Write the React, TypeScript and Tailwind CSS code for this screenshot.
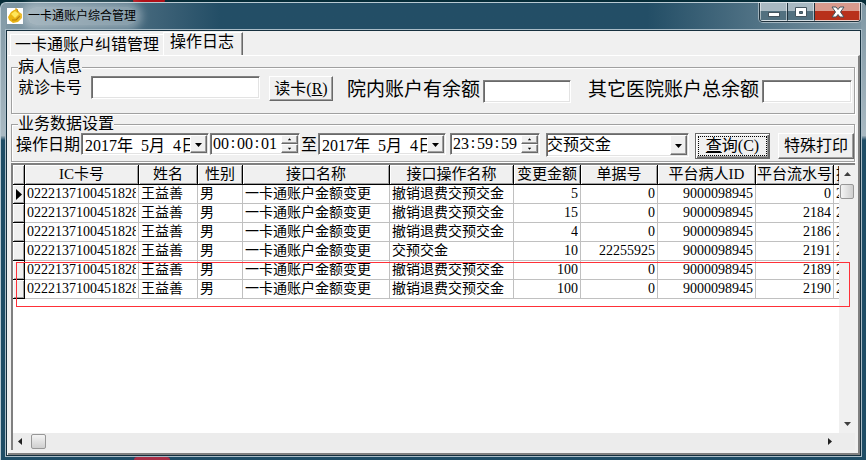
import type { ReactNode } from "react";

const sunken =
  "border border-t-[#808080] border-l-[#808080] border-r-white border-b-white shadow-[inset_1px_1px_0_#696969,inset_-1px_-1px_0_#e3e3e3] bg-white";
const raised =
  "border border-t-white border-l-white border-r-[#696969] border-b-[#696969] shadow-[inset_-1px_-1px_0_#a0a0a0] bg-[#f0f0f0]";

type Align = "left" | "right";
interface Column {
  title: string;
  width: string;
  align: Align;
}

const columns: Column[] = [
  { title: "IC卡号", width: "w-[114px]", align: "left" },
  { title: "姓名", width: "w-[59px]", align: "left" },
  { title: "性别", width: "w-[45px]", align: "left" },
  { title: "接口名称", width: "w-[147px]", align: "left" },
  { title: "接口操作名称", width: "w-[124px]", align: "left" },
  { title: "变更金额", width: "w-[67px]", align: "right" },
  { title: "单据号", width: "w-[77px]", align: "right" },
  { title: "平台病人ID", width: "w-[98px]", align: "right" },
  { title: "平台流水号", width: "w-[78px]", align: "right" },
  { title: "操", width: "", align: "left" },
];

const records = [
  { op: "撤销退费交预交金", amount: "5", bill: "0", serial: "0" },
  { op: "撤销退费交预交金", amount: "15", bill: "0", serial: "2184" },
  { op: "撤销退费交预交金", amount: "4", bill: "0", serial: "2186" },
  { op: "交预交金", amount: "10", bill: "22255925", serial: "2191" },
  { op: "撤销退费交预交金", amount: "100", bill: "0", serial: "2189" },
  { op: "撤销退费交预交金", amount: "100", bill: "0", serial: "2190" },
];

function Group({ title, children }: { title: string; children: ReactNode }) {
  return (
    <fieldset className="min-w-0 border border-[#a0a0a0] shadow-[inset_1px_1px_0_white,1px_1px_0_white]">
      <legend className="ml-1.5 bg-[#f0f0f0] text-base leading-4">{title}</legend>
      {children}
    </fieldset>
  );
}

function Arrow({ dir, className = "" }: { dir: "up" | "down" | "left" | "right"; className?: string }) {
  const points = {
    up: "0,5 7,5 3.5,1",
    down: "0,2 7,2 3.5,6",
    left: "5,0 5,7 1,3.5",
    right: "2,0 2,7 6,3.5",
  }[dir];
  return (
    <svg viewBox="0 0 7 7" className={`size-[7px] shrink-0 ${className}`} aria-hidden="true">
      <polygon points={points} fill="currentColor" />
    </svg>
  );
}

function DateBox({ label }: { label: string }) {
  return (
    <div className={`flex h-[22px] w-[128px] shrink-0 p-px ${sunken}`}>
      <input
        aria-label={label}
        defaultValue={"2017年\u00a0\u00a05月\u00a0\u00a04日"}
        className="min-w-0 flex-1 pl-0.5 text-base leading-4 outline-none"
      />
      <button aria-label={`${label}下拉`} className={`flex w-[17px] items-center justify-center ${raised}`}>
        <Arrow dir="down" />
      </button>
    </div>
  );
}

function TimeBox({ label, parts }: { label: string; parts: string[] }) {
  return (
    <div role="group" aria-label={label} className={`flex h-[22px] w-[90px] shrink-0 p-px ${sunken}`}>
      <div className="flex flex-1 items-center pl-px text-base leading-4">
        {parts.map((p, i) => (
          <span key={i} className="flex">
            {i > 0 && <span className="w-2 text-center">:</span>}
            <input aria-label={`${label}${["时", "分", "秒"][i]}`} defaultValue={p} className="w-4 outline-none" />
          </span>
        ))}
      </div>
      <div className="flex w-[17px] flex-col">
        <button aria-label={`${label}增加`} className={`flex flex-1 items-center justify-center ${raised}`}>
          <Arrow dir="up" className="scale-50" />
        </button>
        <button aria-label={`${label}减少`} className={`flex flex-1 items-center justify-center ${raised}`}>
          <Arrow dir="down" className="scale-50" />
        </button>
      </div>
    </div>
  );
}

function TitleBar() {
  return (
    <header className="flex h-[27px] shrink-0 items-start bg-linear-to-r from-[#7f97a4] via-[#234e66] via-25% to-[#234e66] to-70%">
      <div className="flex h-full flex-1 items-start bg-linear-to-r from-transparent from-75% to-[#7c95a3] to-100%">
        <svg viewBox="0 0 16 16" className="mt-[5px] ml-px size-4 bg-white" aria-hidden="true">
          <path d="M1 9 L4 4 L7 2 L10 1 L12 4 L15 6 L15 10 L11 14 L6 15 L2 12 Z" fill="#eab414" />
          <path d="M4 6 L8 3 L12 6 L8 10 Z" fill="#ffe65a" />
          <path d="M5 12 L9 12 L13 8" fill="none" stroke="#b67c06" strokeWidth="1.2" />
          <path d="M8 1 L10 1 L11 4" fill="none" stroke="#c99208" />
        </svg>
        <h1 className="mt-1 ml-1 rounded-full bg-white/35 px-px text-xs leading-[18px] font-normal shadow-[0_0_8px_5px_rgba(255,255,255,0.35)]">
          一卡通账户综合管理
        </h1>
        <div className="ml-auto flex h-[19px] overflow-hidden rounded-b-[4px] border border-t-0 border-[#20323d] text-white shadow-[0_0_0_1px_rgba(255,255,255,0.45)]">
          <button aria-label="最小化" className="w-[27px] border border-t-0 border-white/50 bg-linear-to-b from-[#a9b9c2] from-45% to-[#52707f] to-50%">
            <svg viewBox="0 0 25 18" aria-hidden="true">
              <rect x="7.5" y="9.500" width="11" height="4" fill="white" stroke="#44545e" />
            </svg>
          </button>
          <button aria-label="最大化" className="w-[27px] border border-t-0 border-l-[#20323d] border-white/50 bg-linear-to-b from-[#a9b9c2] from-45% to-[#52707f] to-50%">
            <svg viewBox="0 0 25 18" aria-hidden="true">
              <path d="M7.500 4.500h11v9h-11z M11.500 8.500v2h3v-2z" fill="white" fillRule="evenodd" stroke="#44545e" />
            </svg>
          </button>
          <button aria-label="关闭" className="w-[46px] border border-t-0 border-l-[#20323d] border-white/50 bg-linear-to-b from-[#d99a8d] from-45% to-[#b8301b] to-50%">
            <svg viewBox="0 0 44 18" aria-hidden="true">
              <path d="M17 4h4l2 2.500 2-2.500h4l-3.500 5 3.500 5h-4l-2-2.500-2 2.500h-4l3.500-5z" fill="white" stroke="#44545e" />
            </svg>
          </button>
        </div>
      </div>
    </header>
  );
}

function LogTable() {
  return (
    <table className="w-full table-fixed border-separate border-spacing-0 text-sm leading-[18px]">
      <colgroup>
        <col className="w-3" />
        {columns.map((c) => (
          <col key={c.title} className={c.width} />
        ))}
      </colgroup>
      <thead>
        <tr className="h-5">
          <th className="border-r border-b border-black bg-[#f0f0f0] p-0 shadow-[inset_1px_1px_0_white,inset_-1px_-1px_0_#a0a0a0]" />
          {columns.map((c) => (
            <th
              key={c.title}
              className="overflow-hidden border-r border-b border-black bg-[#f0f0f0] p-0 text-[15px] leading-[19px] font-normal whitespace-nowrap shadow-[inset_1px_1px_0_white,inset_-1px_-1px_0_#a0a0a0] last:border-r-0 last:pl-0.5"
            >
              {c.title}
            </th>
          ))}
        </tr>
      </thead>
      <tbody>
        {records.map((r, i) => {
          const cells = ["0222137100451828", "王益善", "男", "一卡通账户金额变更", r.op, r.amount, r.bill, "9000098945", r.serial, "2"];
          return (
            <tr key={r.serial} className="h-[19px]">
              <th className="border-r border-b border-black bg-[#f0f0f0] p-0 shadow-[inset_1px_1px_0_white,inset_-1px_-1px_0_#a0a0a0]">
                {i === 0 && (
                  <svg viewBox="0 0 6 11" className="mx-auto h-[11px] w-1.5" aria-hidden="true">
                    <polygon points="0,0 6,5.5 0,11" />
                  </svg>
                )}
              </th>
              {cells.map((value, j) => (
                <td key={j} className="border-r border-b border-[#c0c0c0] px-0.5 py-0 last:border-r-0 last:pr-0">
                  <div className={`overflow-hidden whitespace-nowrap ${columns[j].align === "right" ? "text-right" : "text-left"}`}>
                    {value}
                  </div>
                </td>
              ))}
            </tr>
          );
        })}
      </tbody>
    </table>
  );
}

export default function App() {
  return (
    <div className="flex h-screen flex-col overflow-hidden bg-[#062c38] font-['Liberation_Serif','Noto_Sans_CJK_SC',serif] text-black">
      <div className="flex h-0.5 shrink-0 pl-[133px]">
        <span className="h-1.5 w-8 rounded-b-full bg-[#b01018]" />
      </div>
      <div className="flex min-h-0 flex-1 flex-col rounded-t-md border-t border-l border-[#b9cad3] bg-linear-to-b from-[#7f97a4] via-[#a9b9c2] via-29% to-[#1f4d66] to-30% px-[5px]">
        <TitleBar />
        <main className="flex min-h-0 flex-1 flex-col border border-[#16303e] bg-[#f0f0f0] pt-px pl-px shadow-[0_0_0_1px_#a9bcc7]">
          <div role="tablist" className="flex items-end pl-0.5 text-base">
            <button role="tab" aria-selected="false" className="h-[21px] border-t border-l border-white pr-1 pl-1 leading-5">
              一卡通账户纠错管理
            </button>
            <button
              role="tab"
              aria-selected="true"
              className="h-[23px] border-t border-r border-l border-t-white border-r-[#696969] border-l-white pr-2 pb-1 pl-1.5 leading-[18px] shadow-[inset_-1px_0_0_#a0a0a0]"
            >
              操作日志
            </button>
          </div>
          <div
            role="tabpanel"
            className="flex min-h-0 flex-1 flex-col border-t border-r-2 border-b-2 border-t-white border-r-[#808080] border-b-[#808080] p-[3px]"
          >
            <Group title="病人信息">
              <div className="flex items-start pt-px pr-0.5 pb-2.5 pl-1.5">
                <div className="flex shrink-0 items-center gap-[9px]">
                  <label htmlFor="card" className="text-base leading-4 whitespace-nowrap">就诊卡号</label>
                  <input id="card" className={`h-[23px] w-[169px] px-1 text-base ${sunken}`} />
                </div>
                <button className={`ml-[9px] h-[25px] w-16 shrink-0 text-base leading-5 whitespace-nowrap ${raised}`}>
                  读卡(<u>R</u>)
                </button>
                <div className="mt-1 ml-3.5 flex shrink-0 gap-[3px]">
                  <label htmlFor="inner" className="text-[19px] leading-5 whitespace-nowrap">院内账户有余额</label>
                  <input id="inner" className={`h-[23px] w-[88px] px-1 text-base ${sunken}`} />
                </div>
                <div className="mt-1 ml-[17px] flex min-w-0 flex-1 gap-[3px]">
                  <label htmlFor="other" className="text-[19px] leading-5 whitespace-nowrap">其它医院账户总余额</label>
                  <input id="other" className={`h-[23px] min-w-0 flex-1 px-1 text-base ${sunken}`} />
                </div>
              </div>
            </Group>
            <div className="mt-0.5">
              <Group title="业务数据设置">
                <div className="flex items-start gap-px pt-px pb-0.5 pl-1">
                  <span className="text-base leading-[23px] whitespace-nowrap">操作日期</span>
                  <DateBox label="开始日期" />
                  <TimeBox label="开始时间" parts={["00", "00", "01"]} />
                  <span className="text-base leading-[23px]">至</span>
                  <DateBox label="结束日期" />
                  <div className="ml-[3px] flex min-w-0 flex-1 gap-1.5">
                    <TimeBox label="结束时间" parts={["23", "59", "59"]} />
                    <div className="relative min-w-0 flex-1">
                      <select aria-label="操作类型" className={`h-6 w-full appearance-none text-base leading-5 ${sunken}`}>
                        <option>交预交金</option>
                      </select>
                      <span className={`pointer-events-none absolute top-0.5 right-0.5 flex h-5 w-[17px] items-center justify-center ${raised}`}>
                        <Arrow dir="down" />
                      </span>
                    </div>
                    <div className="flex shrink-0 gap-2">
                      <button className="h-[26px] w-[75px] border border-[#696969] bg-[#f0f0f0] p-0.5 text-base leading-4 shadow-[inset_1px_1px_0_white,inset_-1px_-1px_0_#696969,inset_-2px_-2px_0_#a0a0a0]">
                        <span className="flex h-full items-center justify-center border border-dotted border-black">
                          <u>查</u>询(C)
                        </span>
                      </button>
                      <button className={`h-[26px] w-[76px] text-base leading-5 ${raised}`}>特殊打印</button>
                    </div>
                  </div>
                </div>
              </Group>
            </div>
            <div className="relative mt-px flex min-h-0 flex-1 flex-col border-t-2 border-l-2 border-[#808080] bg-white">
              <div className="flex min-h-0 flex-1">
                <div className="min-w-0 flex-1 overflow-hidden">
                  <LogTable />
                </div>
                <div className="flex w-4 shrink-0 flex-col items-center bg-[#f0f0f0] text-[#404040]">
                  <Arrow dir="up" className="mt-1.5" />
                  <span className="mt-1.5 h-[15px] w-3.5 rounded-xs border border-[#979797] bg-linear-to-r from-[#f4f4f4] to-[#cfcfcf]" />
                  <Arrow dir="down" className="mt-auto mb-1.5" />
                </div>
              </div>
              <div className="flex h-[17px] shrink-0 items-center bg-[#ececec] pl-1 text-[#202020]">
                <Arrow dir="left" />
                <span className="ml-[7px] h-[15px] w-[15px] rounded-xs border border-[#979797] bg-linear-to-b from-[#f4f4f4] to-[#cfcfcf]" />
                <Arrow dir="right" className="mr-[22px] ml-auto" />
              </div>
              <div className="pointer-events-none absolute top-[97px] right-[5px] left-[3px] h-[45px] border border-[#ff3038]" />
            </div>
          </div>
        </main>
        <div className="flex h-1 shrink-0 items-end pl-32">
          <span className="h-[3px] w-9 rounded-t-full bg-[#a83048]" />
        </div>
      </div>
    </div>
  );
}
